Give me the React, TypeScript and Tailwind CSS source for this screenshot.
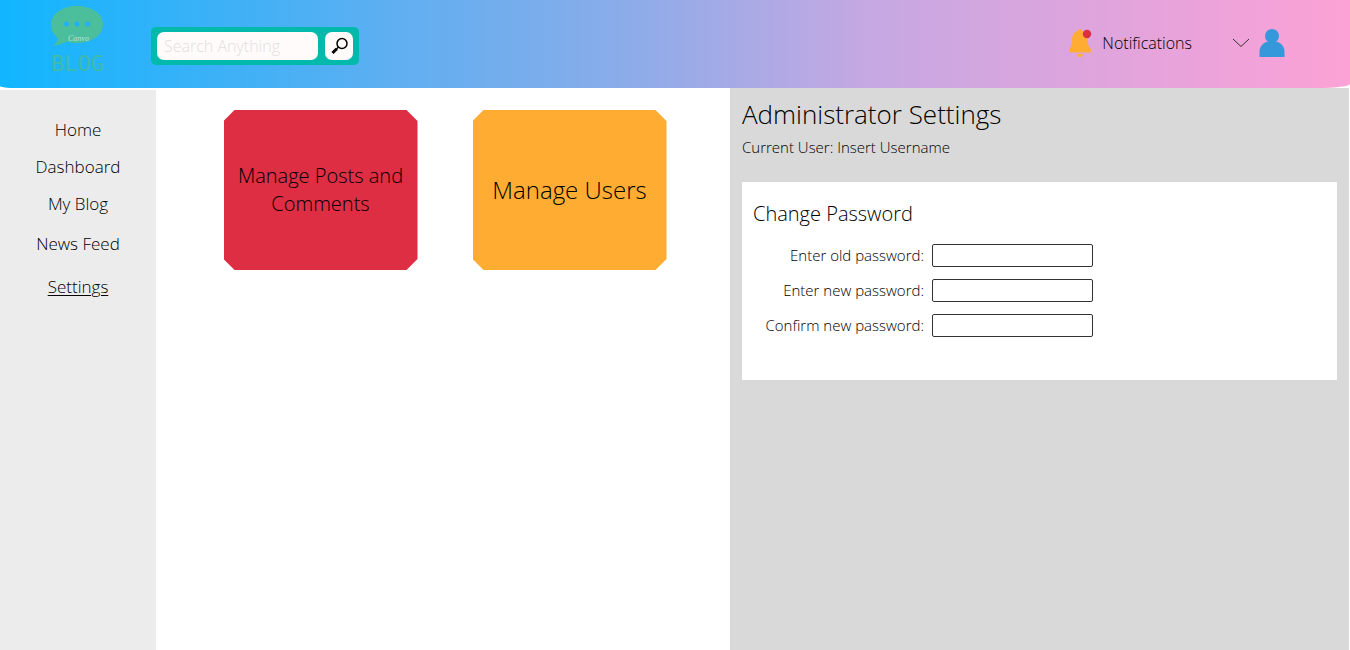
import React from "react";

const primaryLinks = ["Home", "Dashboard", "My Blog"];
const secondaryLinks = ["News Feed", "Settings"];

const passwordFields = [
  { id: "old-password", label: "Enter old password:" },
  { id: "new-password", label: "Enter new password:" },
  { id: "confirm-password", label: "Confirm new password:" },
];

function Logo() {
  return (
    <a href="#home" aria-label="Blog home" className="block">
      <svg width="56" height="72" viewBox="0 0 56 72">
        <path
          fill="#4bbf9c"
          d="M28 2C13 2 2 10 2 20.500C2 26 4.500 30.500 9 34C8.500 37.500 7 40 4 42C10 41 14 39.500 18 37.500C21 38.500 25 39 28 39C43 39 54 31 54 20.500C54 10 43 2 28 2Z"
        />
        <g fill="#1fb2fb">
          <circle cx="17.500" cy="20" r="2.500" />
          <circle cx="28" cy="20" r="2.500" />
          <circle cx="38.500" cy="20" r="2.500" />
        </g>
        <text x="19" y="37" fontSize="8" fontStyle="italic" fontWeight="400" fill="#b4e2d4" fontFamily="'Liberation Serif', serif">
          Canva
        </text>
        <text x="2" y="67" fontSize="22" fontWeight="400" fill="#3fbbac" fontFamily="'DejaVu Sans Mono', monospace">
          BLOG
        </text>
      </svg>
    </a>
  );
}

function SearchIcon() {
  return (
    <svg width="18" height="18" viewBox="0 0 18 18" fill="none" stroke="#000">
      <circle cx="12" cy="6.500" r="5" strokeWidth="1.500" />
      <path d="M8.500 10L6.500 12" strokeWidth="1.500" />
      <path d="M6.800 11.700L2.500 16" strokeWidth="3" />
    </svg>
  );
}

function BellIcon() {
  return (
    <svg width="24" height="30" viewBox="0 0 24 30">
      <path
        fill="#ffac33"
        d="M12 1C10.800 1 10.200 1.700 10.200 2.800C6.500 3.600 4.200 6.800 4.200 11C4.200 16 3.500 18.500 1.600 20.500C0.500 21.800 0.800 24.500 2 24.500H22C23.200 24.500 23.500 21.800 22.400 20.500C20.500 18.500 19.800 16 19.800 11C19.800 6.800 17.500 3.600 13.800 2.800C13.800 1.700 13.200 1 12 1Z"
      />
      <path fill="#ffac33" d="M9 26H15C15 27.800 13.800 29 12 29S9 27.800 9 26Z" />
      <circle cx="19" cy="6" r="4.200" fill="#dd2e44" />
    </svg>
  );
}

function UserIcon() {
  return (
    <svg width="26" height="28" viewBox="0 0 26 28" fill="#3498db">
      <circle cx="13" cy="7" r="7" />
      <path d="M0.500 28V23C0.500 17 4.500 13 10 12.500H16C21.500 13 25.500 17 25.500 23V28Z" />
    </svg>
  );
}

function Header() {
  return (
    <header className="flex h-[88px] items-start justify-between bg-[linear-gradient(90deg,#10b6ff_0%,#3cb1f7_16%,#8aace9_46%,#c5a8e2_64%,#e2a4dc_83%,#fca2d6_100%)] [border-bottom-left-radius:16px_2px] [border-bottom-right-radius:32px_4px]">
      <div className="flex items-start pl-[49px]">
        <div className="pt-1">
          <Logo />
        </div>
        <form
          role="search"
          onSubmit={(event) => event.preventDefault()}
          className="mt-[27px] ml-[46px] flex h-[38px] items-center gap-[7px] rounded-[5px] bg-[#03b9ab] px-[6px]"
        >
          <input
            type="search"
            aria-label="Search Anything"
            placeholder="Search Anything"
            className="h-7 w-[161px] rounded-[7px] bg-[#fffbfa] px-[7px] text-base font-light outline-none placeholder:text-[#dfdfdf]"
          />
          <button type="submit" aria-label="Search" className="flex h-7 w-7 items-center justify-center rounded-[7px] bg-[#fffbfa]">
            <SearchIcon />
          </button>
        </form>
      </div>
      <div className="flex h-[86px] items-center pr-[65px]">
        <button type="button" className="flex items-center gap-[10px]">
          <BellIcon />
          <span>Notifications</span>
        </button>
        <button type="button" aria-label="Account menu" className="ml-10 flex items-center gap-[9px]">
          <svg width="18" height="10" viewBox="0 0 18 10" fill="none" stroke="#333" strokeWidth="1">
            <path d="M1 1L9 8.500L17 1" />
          </svg>
          <UserIcon />
        </button>
      </div>
    </header>
  );
}

function Sidebar() {
  return (
    <nav className="mt-0.5 w-[156px] shrink-0 bg-[#ececec] pt-[21px] text-center text-[17px]">
      <ul>
        {primaryLinks.map((name) => (
          <li key={name} className="leading-[37px]">
            <a href="#section">{name}</a>
          </li>
        ))}
        {secondaryLinks.map((name) => (
          <li key={name} className="leading-[43px]">
            <a
              href="#section"
              className={name === "Settings" ? "underline decoration-1 underline-offset-2" : ""}
            >
              {name}
            </a>
          </li>
        ))}
      </ul>
    </nav>
  );
}

const octagon =
  "flex h-40 w-[194px] items-center justify-center [clip-path:polygon(11px_0,calc(100%-11px)_0,100%_11px,100%_calc(100%-11px),calc(100%-11px)_100%,11px_100%,0_calc(100%-11px),0_11px)]";

function SettingsPanel() {
  return (
    <section className="mr-px w-[619px] shrink-0 bg-[#d9d9d9] px-3 pt-2">
      <h1 className="text-[26px] leading-9">Administrator Settings</h1>
      <p className="mt-1 text-[15px] leading-[22px]">Current User: Insert Username</p>
      <form className="mt-6 bg-white px-[11px] pt-4 pb-[37px]">
        <h2 className="text-xl leading-8">Change Password</h2>
        <div className="mt-2">
          {passwordFields.map((field) => (
            <div key={field.id} className="flex h-[35px] items-center gap-2">
              <label htmlFor={field.id} className="w-[171px] text-right text-[15px]">
                {field.label}
              </label>
              <input
                id={field.id}
                type="password"
                className="h-[23px] w-[161px] rounded-[2px] border border-[#333] bg-white px-1"
              />
            </div>
          ))}
        </div>
      </form>
    </section>
  );
}

export default function App() {
  return (
    <div className="flex min-h-screen flex-col bg-white font-['Open_Sans',sans-serif] font-light text-black">
      <Header />
      <div className="flex flex-1">
        <Sidebar />
        <main className="flex flex-1 items-start justify-center gap-[55px] pt-[22px] pl-1">
          <button type="button" className={`${octagon} bg-[#dd2e44] text-xl leading-7`}>
            Manage Posts and Comments
          </button>
          <button type="button" className={`${octagon} bg-[#ffac33] text-2xl`}>
            Manage Users
          </button>
        </main>
        <SettingsPanel />
      </div>
    </div>
  );
}
